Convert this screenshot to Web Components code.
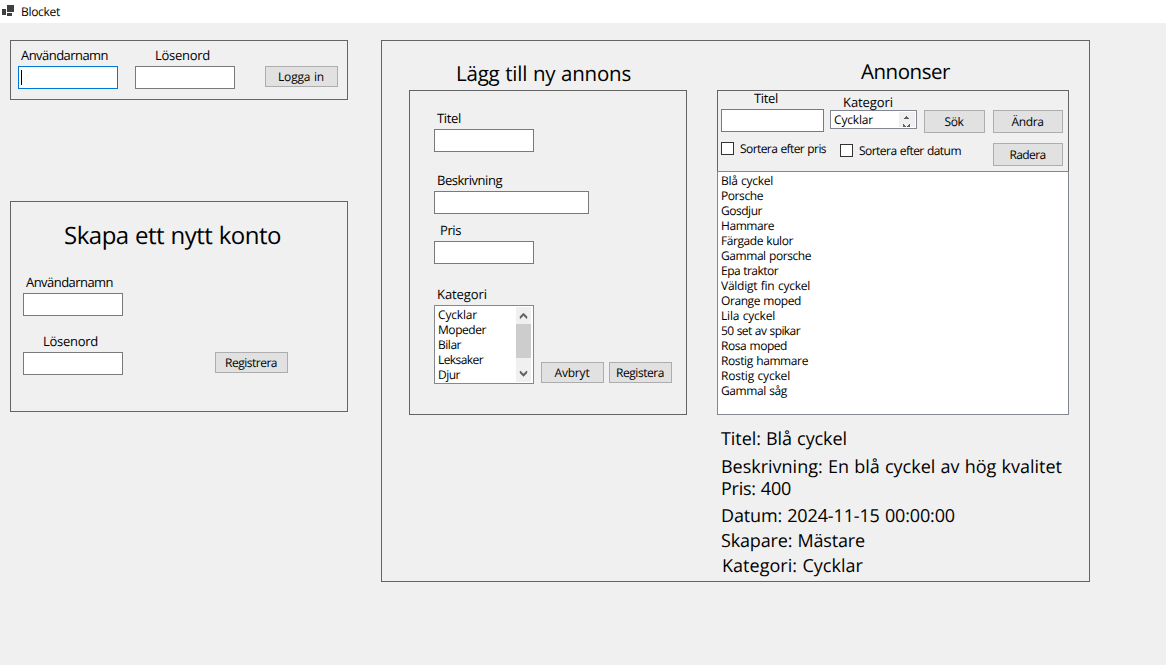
<!DOCTYPE html>
<html lang="sv">
<head>
<meta charset="utf-8">
<title>Blocket</title>
<style>
html,body{margin:0;height:100%;background:#f0f0f0;overflow:hidden}
body{font-family:"Open Sans","Noto Sans",sans-serif;color:#000}
</style>
</head>
<body>
<blocket-app></blocket-app>
<script>
const define = (name, html, setup) => {
  const t = document.createElement('template');
  t.innerHTML = html;
  customElements.define(name, class extends HTMLElement {
    constructor() {
      super();
      this.attachShadow({mode: 'open'}).append(t.content.cloneNode(true));
    }
    connectedCallback() { if (setup) setup.call(this, this.shadowRoot); }
  });
};

// Text line; "w" gives the width that the tracking is adjusted to.
define('ui-label', `<style>
:host{display:block;height:15px;line-height:15px;font-size:12px;word-spacing:.6px;white-space:nowrap;text-rendering:geometricPrecision}
:host([size=m]){height:17px;line-height:16px;font-size:13px}
:host([size=l]){height:24px;line-height:26px;font-size:18px}
:host([size=xl]){height:28px;line-height:28px;font-size:20.5px}
:host([size=xxl]){height:34px;line-height:36px;font-size:24px}
span{display:inline-block}
</style><span><slot></slot></span>`, function (root) {
  const w = +this.getAttribute('w');
  if (!w) return;
  const span = root.querySelector('span');
  const n = this.textContent.length;
  span.style.letterSpacing = ((w - span.getBoundingClientRect().width) / n) + 'px';
});

define('ui-panel', `<style>
:host{display:flex;flex-direction:column;align-items:flex-start;box-sizing:border-box;border:1px solid #646464}
</style><slot></slot>`);

define('ui-input', `<style>
:host{display:block;box-sizing:border-box;width:100px;height:23px;border:1px solid #7a7a7a;background:#fff;padding:3px 0 0 3px}
:host([focused]){border-color:#0078d7}
i{display:none;width:1px;height:15px;background:#000}
:host([focused]) i{display:block;margin-left:-1px}
</style><i></i>`);

define('ui-button', `<style>
:host{display:flex;align-items:center;justify-content:center;box-sizing:border-box;height:21px;width:73px;padding-right:1px;border:1px solid #adadad;background:#e1e1e1}
:host([tall]){height:23px}
</style><slot></slot>`);

define('ui-check', `<style>
:host{display:flex;align-items:flex-start;gap:6px}
b{display:block;flex:none;box-sizing:border-box;width:13px;height:13px;border:1px solid #333;background:#fff}
slot{display:block;margin-top:-1px}
</style><b></b><slot></slot>`);

define('ui-listbox', `<style>
:host{display:flex;justify-content:space-between;box-sizing:border-box;border:1px solid #828790;background:#fff;overflow:hidden}
div{padding:1px 0 0 3px}
</style><div><slot></slot></div><slot name="bar"></slot>`);

define('ui-scrollbar', `<style>
:host{display:block;width:15px;height:75px;margin:1px 2px 0 0;background:#f0f0f0}
svg{display:block}
</style><svg width="15" height="75"><path d="M0 17h15v34H0z" fill="#cdcdcd"/><path d="M4 11.6V9.6L7.5 6 11 9.6v2h-.5l-3-3-3 3zM4 64V66l3.5 3.5L11 66v-2h-.5l-3 3-3-3z" fill="#606060" stroke="#606060" stroke-width=".4"/></svg>`);

define('ui-spin', `<style>
:host{display:block;width:16px;height:15px;margin:1px 1px 0 0;background:#f0f0f0}
svg{display:block}
</style><svg width="16" height="15" fill="#606060" shape-rendering="crispEdges"><path d="M7 4h1v1h1v1h1v1H5V6h1V5h1zM4 12h1v1h1v1h1v1H4zM10 12h1v3H8v-1h1v-1h1z"/></svg>`);

define('title-bar', `<style>
:host{display:flex;height:23px;background:#fff;padding-left:2px;box-sizing:border-box}
svg{display:block;margin-top:5px}
ui-label{margin:4px 0 0 7px}
</style><svg width="12" height="12" fill="#404040" shape-rendering="crispEdges"><path d="M0 4h4v6H0zM5 0h7v7H5zM5 8h5v3H5z"/></svg><ui-label w="39">Blocket</ui-label>`);

define('login-panel', `<style>
ui-panel{width:338px;height:60px;flex-direction:row;padding-left:7px}
.u{width:117px}.p{width:130px}
.u,.p{padding-top:6px}
ui-input{margin-top:2px}
.u ui-label{margin-left:3px}.p ui-label{margin-left:20px}
ui-button{margin-top:25px}
</style><ui-panel>
<div class="u"><ui-label size="m" w="87">Användarnamn</ui-label><ui-input focused></ui-input></div>
<div class="p"><ui-label size="m" w="55">Lösenord</ui-label><ui-input></ui-input></div>
<ui-button><ui-label w="46">Logga in</ui-label></ui-button></ui-panel>`);

define('register-panel', `<style>
ui-panel{width:338px;height:211px;padding:16px 0 0 12px}
.h{margin-left:41px}
.u{margin:22px 0 2px 3px}.p{margin:17px 0 2px 20px}
.row{display:flex;gap:92px}
</style><ui-panel>
<ui-label class="h" size="xxl" w="217">Skapa ett nytt konto</ui-label>
<ui-label class="u" size="m" w="87">Användarnamn</ui-label><ui-input></ui-input>
<ui-label class="p" size="m" w="55">Lösenord</ui-label>
<div class="row"><ui-input></ui-input><ui-button><ui-label w="52">Registrera</ui-label></ui-button></div></ui-panel>`);

define('ad-form', `<style>
:host{display:block;width:278px;padding-top:19px}
.h{margin:0 0 2px 47px}
ui-panel{width:278px;height:325px;padding:19px 0 0 24px}
ui-panel>ui-label{margin:0 0 2px 3px}
ui-panel>.b{margin-top:20px}
ui-panel>.r{margin:8px 0 2px 6px}
ui-panel>.k{margin-top:22px}
.wide{width:155px}
.row{display:flex;align-items:flex-end}
ui-listbox{width:100px;height:79px}
ui-button{width:63px;margin:0 -2px 1px 7px}
ui-button+ui-button{margin-right:0}
</style><ui-label class="h" size="xl" w="175">Lägg till ny annons</ui-label>
<ui-panel>
<ui-label size="m" w="24">Titel</ui-label><ui-input></ui-input>
<ui-label class="b" size="m" w="65">Beskrivning</ui-label><ui-input class="wide"></ui-input>
<ui-label class="r" size="m" w="21">Pris</ui-label><ui-input></ui-input>
<ui-label class="k" size="m" w="50">Kategori</ui-label>
<div class="row"><ui-listbox>
<ui-label w="39">Cycklar</ui-label><ui-label w="48">Mopeder</ui-label><ui-label w="23">Bilar</ui-label><ui-label w="45">Leksaker</ui-label><ui-label w="22">Djur</ui-label>
<ui-scrollbar slot="bar"></ui-scrollbar></ui-listbox>
<ui-button><ui-label w="35">Avbryt</ui-label></ui-button><ui-button><ui-label w="48">Registera</ui-label></ui-button></div>
</ui-panel>`);

define('ad-search', `<style>
ui-panel{width:352px;height:81px;border-bottom:0;padding-left:3px;flex-direction:row}
.left{width:203px}
.fields{display:flex;height:51px}
.t{width:109px;margin-top:-1px}
.t ui-label{margin-left:33px}
.t ui-input{width:103px;margin-top:2px}
.k{margin-top:3px}
.k ui-label[size]{margin:0 0 -1px 13px}
ui-listbox{width:87px;height:19px}
.checks{display:flex}
ui-check{width:119px;flex:none}
ui-check+ui-check{margin-top:2px;width:130px}
.s{width:61px;margin:19px 8px 0 0}
.right{display:grid;gap:10px;align-content:start;margin-top:19px}
.right ui-button{width:70px}
</style><ui-panel>
<div class="left"><div class="fields">
<div class="t"><ui-label size="m" w="24">Titel</ui-label><ui-input></ui-input></div>
<div class="k"><ui-label size="m" w="50">Kategori</ui-label><ui-listbox><ui-label w="39">Cycklar</ui-label><ui-spin slot="bar"></ui-spin></ui-listbox></div></div>
<div class="checks"><ui-check><ui-label w="86">Sortera efter pris</ui-label></ui-check><ui-check><ui-label w="102">Sortera efter datum</ui-label></ui-check></div></div>
<ui-button class="s" tall><ui-label w="19">Sök</ui-label></ui-button>
<div class="right"><ui-button tall><ui-label w="32">Ändra</ui-label></ui-button><ui-button tall><ui-label w="36">Radera</ui-label></ui-button></div>
</ui-panel>`);

const ads = [['Blå cyckel',52],['Porsche',42],['Gosdjur',41],['Hammare',53],['Färgade kulor',72],['Gammal porsche',90],['Epa traktor',57],['Väldigt fin cyckel',89],['Orange moped',80],['Lila cyckel',54],['50 set av spikar',79],['Rosa moped',66],['Rostig hammare',87],['Rostig cyckel',69],['Gammal såg',66]];

define('ad-list', `<style>
ui-listbox{width:352px;height:244px}
</style><ui-listbox>${ads.map(([t, w]) => `<ui-label w="${w}">${t}</ui-label>`).join('')}</ui-listbox>`);

define('ad-details', `<style>
:host{display:block;padding:11px 0 0 4px}
.b{margin-top:4px}.r{margin-top:-2px}.d{margin-top:3px}.s{margin-top:1px}.k{margin:1px 0 0 1px}
</style><ui-label size="l" w="126">Titel: Blå cyckel</ui-label>
<ui-label class="b" size="l" w="341">Beskrivning: En blå cyckel av hög kvalitet</ui-label>
<ui-label class="r" size="l" w="70">Pris: 400</ui-label>
<ui-label class="d" size="l" w="234">Datum: 2024-11-15 00:00:00</ui-label>
<ui-label class="s" size="l" w="144">Skapare: Mästare</ui-label>
<ui-label class="k" size="l" w="141">Kategori: Cycklar</ui-label>`);

define('blocket-app', `<style>
:host{display:block}
main{display:flex;align-items:flex-start;gap:33px;padding:17px 10px}
.left{display:grid;gap:101px}
.market{width:709px;height:542px;flex-direction:row;padding-left:27px;gap:30px}
.right{padding-top:17px}
.h{margin:0 0 4px 144px}
</style><title-bar></title-bar><main>
<div class="left"><login-panel></login-panel><register-panel></register-panel></div>
<ui-panel class="market"><ad-form></ad-form>
<div class="right"><ui-label class="h" size="xl" w="89">Annonser</ui-label><ad-search></ad-search><ad-list></ad-list><ad-details></ad-details></div></ui-panel>
</main>`);
</script>
</body>
</html>
